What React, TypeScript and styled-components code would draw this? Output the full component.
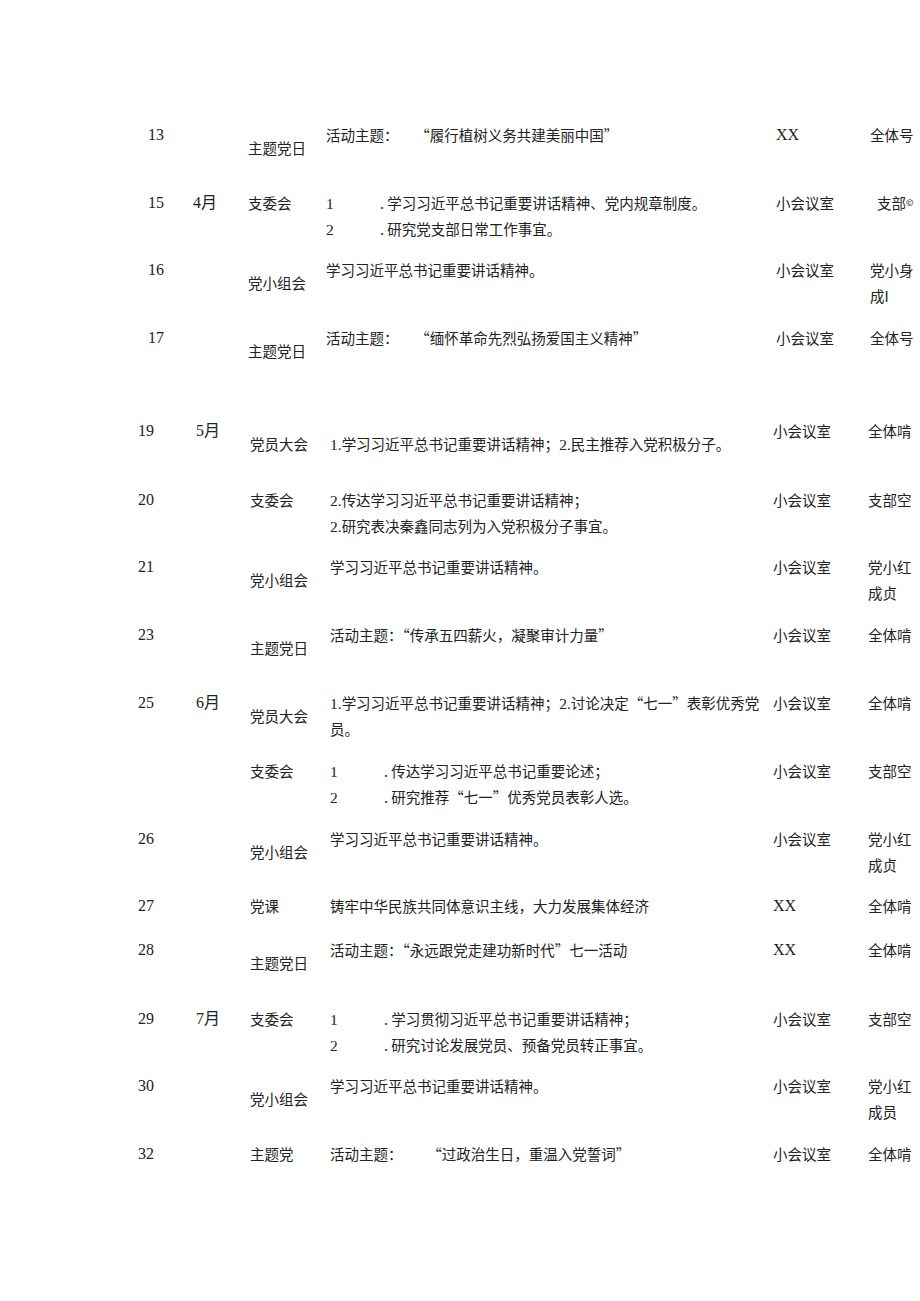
import styled, { createGlobalStyle } from "styled-components";

const GlobalStyle = createGlobalStyle`
  html, body {
    margin: 0;
    padding: 0;
    background: #ffffff;
  }
  body {
    width: 920px;
    min-height: 1301px;
    overflow-x: hidden;
    font-family: "Noto Sans CJK SC", sans-serif;
    color: #222222;
  }
`;

const SECTION_ONE = { left: 148, cols: "45px 55px 78px 450px 94px 1fr" };
const SECTION_TWO = { left: 138, cols: "58px 54px 80px 443px 95px 1fr" };

const Page = styled.main`
  padding-top: 122px;
  min-height: 1301px;
  box-sizing: border-box;
`;

const Section = styled.section<{ $left: number }>`
  padding-left: ${(p) => p.$left}px;
`;

const Row = styled.div<{ $cols: string; $height: number }>`
  display: grid;
  grid-template-columns: ${(p) => p.$cols};
  height: ${(p) => p.$height}px;
  font-size: 14.5px;
  line-height: 25px;
  white-space: nowrap;
`;

const Num = styled.div`
  font-family: "Liberation Serif", "Noto Sans CJK SC", serif;
  font-size: 16px;
`;

const Month = styled.div`
  font-family: "Liberation Serif", "Noto Sans CJK SC", serif;
  font-size: 16px;
`;

const Type = styled.div<{ $drop?: boolean }>`
  padding-top: ${(p) => (p.$drop ? 13 : 0)}px;
`;

const Content = styled.div<{ $drop?: boolean }>`
  display: flex;
  flex-direction: column;
  padding-top: ${(p) => (p.$drop ? 13 : 0)}px;
`;

const SubItem = styled.div`
  display: flex;
`;

const SubNo = styled.span`
  width: 54px;
`;

const Quote = styled.span<{ $gap: number }>`
  margin-left: ${(p) => p.$gap}px;
`;

const Place = styled.div<{ $latin?: boolean }>`
  font-family: ${(p) =>
    p.$latin
      ? `"Liberation Serif", "Noto Sans CJK SC", serif`
      : `"Noto Sans CJK SC", sans-serif`};
  font-size: ${(p) => (p.$latin ? 16 : 14.5)}px;
`;

const Who = styled.div<{ $indent?: number }>`
  display: flex;
  flex-direction: column;
  padding-left: ${(p) => p.$indent ?? 0}px;
  line-height: 26px;
`;

const Mark = styled.span`
  font-size: 9px;
  vertical-align: 3px;
`;

const Digits = styled.span`
  font-family: "Liberation Serif", serif;
  font-size: 15.5px;
`;

function Sub({ no, text }: { no: string; text: string }) {
  return (
    <SubItem>
      <SubNo>
        <Digits>{no}</Digits>
      </SubNo>
      <span>. {text}</span>
    </SubItem>
  );
}

function Theme({ text, gap }: { text: string; gap: number }) {
  return (
    <span>
      活动主题：<Quote $gap={gap}>{text}</Quote>
    </span>
  );
}

export default function App() {
  const a = SECTION_ONE.cols;
  const b = SECTION_TWO.cols;

  return (
    <>
      <GlobalStyle />
      <Page>
        <Section $left={SECTION_ONE.left}>
          <Row $cols={a} $height={68}>
            <Num>13</Num>
            <Month />
            <Type $drop>主题党日</Type>
            <Content>
              <Theme text="“履行植树义务共建美丽中国”" gap={24} />
            </Content>
            <Place $latin>XX</Place>
            <Who>全体号</Who>
          </Row>
          <Row $cols={a} $height={67}>
            <Num>15</Num>
            <Month>4月</Month>
            <Type>支委会</Type>
            <Content>
              <Sub no="1" text="学习习近平总书记重要讲话精神、党内规章制度。" />
              <Sub no="2" text="研究党支部日常工作事宜。" />
            </Content>
            <Place>小会议室</Place>
            <Who $indent={7}>
              <span>
                支部<Mark>©</Mark>
              </span>
            </Who>
          </Row>
          <Row $cols={a} $height={68}>
            <Num>16</Num>
            <Month />
            <Type $drop>党小组会</Type>
            <Content>学习习近平总书记重要讲话精神。</Content>
            <Place>小会议室</Place>
            <Who>
              <span>党小身</span>
              <span>成I</span>
            </Who>
          </Row>
          <Row $cols={a} $height={93}>
            <Num>17</Num>
            <Month />
            <Type $drop>主题党日</Type>
            <Content>
              <Theme text="“缅怀革命先烈弘扬爱国主义精神”" gap={24} />
            </Content>
            <Place>小会议室</Place>
            <Who>全体号</Who>
          </Row>
        </Section>

        <Section $left={SECTION_TWO.left}>
          <Row $cols={b} $height={69}>
            <Num>19</Num>
            <Month>5月</Month>
            <Type $drop>党员大会</Type>
            <Content $drop>
              <span>
                <Digits>1.</Digits>学习习近平总书记重要讲话精神；<Digits>2.</Digits>
                民主推荐入党积极分子。
              </span>
            </Content>
            <Place>小会议室</Place>
            <Who>全体啃</Who>
          </Row>
          <Row $cols={b} $height={67}>
            <Num>20</Num>
            <Month />
            <Type>支委会</Type>
            <Content>
              <span>
                <Digits>2.</Digits>传达学习习近平总书记重要讲话精神；
              </span>
              <span>
                <Digits>2.</Digits>研究表决秦鑫同志列为入党积极分子事宜。
              </span>
            </Content>
            <Place>小会议室</Place>
            <Who>支部空</Who>
          </Row>
          <Row $cols={b} $height={68}>
            <Num>21</Num>
            <Month />
            <Type $drop>党小组会</Type>
            <Content>学习习近平总书记重要讲话精神。</Content>
            <Place>小会议室</Place>
            <Who>
              <span>党小红</span>
              <span>成贞</span>
            </Who>
          </Row>
          <Row $cols={b} $height={68}>
            <Num>23</Num>
            <Month />
            <Type $drop>主题党日</Type>
            <Content>
              <Theme text="“传承五四薪火，凝聚审计力量”" gap={0} />
            </Content>
            <Place>小会议室</Place>
            <Who>全体啃</Who>
          </Row>
          <Row $cols={b} $height={68}>
            <Num>25</Num>
            <Month>6月</Month>
            <Type $drop>党员大会</Type>
            <Content>
              <span>
                <Digits>1.</Digits>学习习近平总书记重要讲话精神；<Digits>2.</Digits>
                讨论决定“七一”表彰优秀党
              </span>
              <span>员。</span>
            </Content>
            <Place>小会议室</Place>
            <Who>全体啃</Who>
          </Row>
          <Row $cols={b} $height={68}>
            <Num />
            <Month />
            <Type>支委会</Type>
            <Content>
              <Sub no="1" text="传达学习习近平总书记重要论述；" />
              <Sub no="2" text="研究推荐“七一”优秀党员表彰人选。" />
            </Content>
            <Place>小会议室</Place>
            <Who>支部空</Who>
          </Row>
          <Row $cols={b} $height={67}>
            <Num>26</Num>
            <Month />
            <Type $drop>党小组会</Type>
            <Content>学习习近平总书记重要讲话精神。</Content>
            <Place>小会议室</Place>
            <Who>
              <span>党小红</span>
              <span>成贞</span>
            </Who>
          </Row>
          <Row $cols={b} $height={44}>
            <Num>27</Num>
            <Month />
            <Type>党课</Type>
            <Content>铸牢中华民族共同体意识主线，大力发展集体经济</Content>
            <Place $latin>XX</Place>
            <Who>全体啃</Who>
          </Row>
          <Row $cols={b} $height={69}>
            <Num>28</Num>
            <Month />
            <Type $drop>主题党日</Type>
            <Content>
              <Theme text="“永远跟党走建功新时代”七一活动" gap={0} />
            </Content>
            <Place $latin>XX</Place>
            <Who>全体啃</Who>
          </Row>
          <Row $cols={b} $height={67}>
            <Num>29</Num>
            <Month>7月</Month>
            <Type>支委会</Type>
            <Content>
              <Sub no="1" text="学习贯彻习近平总书记重要讲话精神；" />
              <Sub no="2" text="研究讨论发展党员、预备党员转正事宜。" />
            </Content>
            <Place>小会议室</Place>
            <Who>支部空</Who>
          </Row>
          <Row $cols={b} $height={68}>
            <Num>30</Num>
            <Month />
            <Type $drop>党小组会</Type>
            <Content>学习习近平总书记重要讲话精神。</Content>
            <Place>小会议室</Place>
            <Who>
              <span>党小红</span>
              <span>成员</span>
            </Who>
          </Row>
          <Row $cols={b} $height={50}>
            <Num>32</Num>
            <Month />
            <Type>主题党</Type>
            <Content>
              <Theme text="“过政治生日，重温入党誓词”" gap={32} />
            </Content>
            <Place>小会议室</Place>
            <Who>全体啃</Who>
          </Row>
        </Section>
      </Page>
    </>
  );
}
